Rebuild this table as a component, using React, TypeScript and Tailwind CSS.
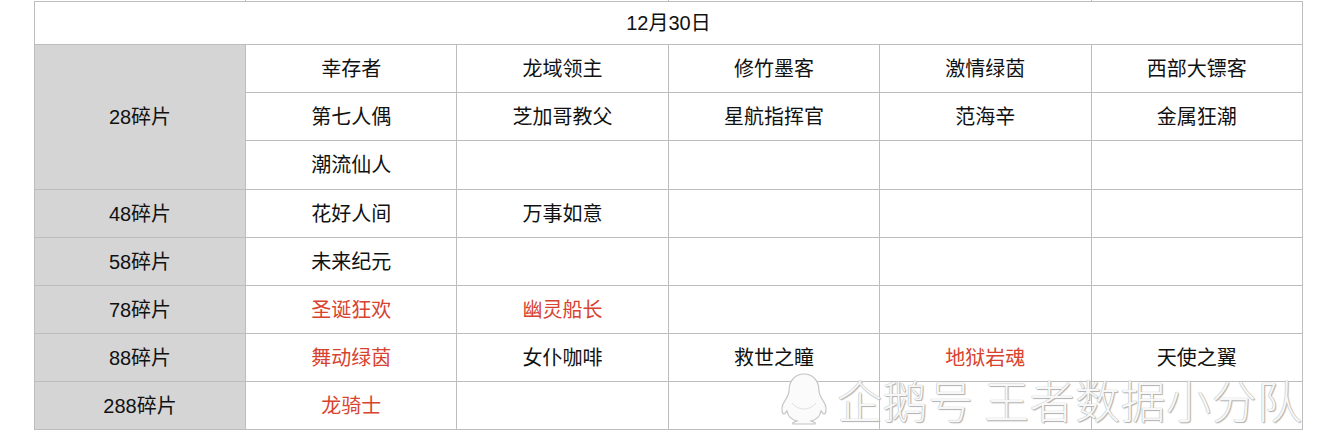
import React from "react";

type Cell = { t: string; red?: boolean };

const rows: { label?: string; span?: number; cells: Cell[] }[] = [
  {
    label: "28碎片",
    span: 3,
    cells: [{ t: "幸存者" }, { t: "龙域领主" }, { t: "修竹墨客" }, { t: "激情绿茵" }, { t: "西部大镖客" }],
  },
  { cells: [{ t: "第七人偶" }, { t: "芝加哥教父" }, { t: "星航指挥官" }, { t: "范海辛" }, { t: "金属狂潮" }] },
  { cells: [{ t: "潮流仙人" }, { t: "" }, { t: "" }, { t: "" }, { t: "" }] },
  { label: "48碎片", cells: [{ t: "花好人间" }, { t: "万事如意" }, { t: "" }, { t: "" }, { t: "" }] },
  { label: "58碎片", cells: [{ t: "未来纪元" }, { t: "" }, { t: "" }, { t: "" }, { t: "" }] },
  {
    label: "78碎片",
    cells: [{ t: "圣诞狂欢", red: true }, { t: "幽灵船长", red: true }, { t: "" }, { t: "" }, { t: "" }],
  },
  {
    label: "88碎片",
    cells: [
      { t: "舞动绿茵", red: true },
      { t: "女仆咖啡" },
      { t: "救世之瞳" },
      { t: "地狱岩魂", red: true },
      { t: "天使之翼" },
    ],
  },
  { label: "288碎片", cells: [{ t: "龙骑士", red: true }, { t: "" }, { t: "" }, { t: "" }, { t: "" }] },
];

function Penguin() {
  return (
    <svg width="50" height="54" viewBox="0 0 50 54" fill="none">
      <path
        d="M25 2C15 2 10 10 10 19c0 4-3 8-6 13-2 5-1 10 1 10 1 0 2-2 3-3 1 5 5 9 10 10-3 1-5 2-4 3h22c1-1-1-2-4-3 5-1 9-5 10-10 1 1 2 3 3 3 2 0 3-5 1-10-3-5-6-9-6-13 0-9-5-17-15-17z"
        fill="#fbfbfb"
        stroke="#c4c4c4"
        strokeWidth="1.2"
      />
      <path d="M13 31c3 4 8 6 12 6s9-2 12-6" stroke="#e0e0e0" strokeWidth="1" />
    </svg>
  );
}

export default function App() {
  return (
    <div className="relative w-[1334px] h-[447px] bg-white overflow-hidden font-['Liberation_Sans','Noto_Sans_CJK_SC',sans-serif] text-[20px] text-[#111]">
      {/* sliver of the previous row */}
      <div className="ml-[34px] w-[1269px] h-[1px] flex">
        <div className="w-[211px]" />
        <div className="w-[1px] bg-[#bdbdbd]" />
        <div className="w-[422px]" />
        <div className="w-[1px] bg-[#bdbdbd]" />
        <div className="w-[422px]" />
        <div className="w-[1px] bg-[#bdbdbd]" />
      </div>
      <table className="ml-[34px] w-[1269px] border-collapse table-fixed">
        <colgroup>
          <col className="w-[211px]" />
          <col />
          <col />
          <col />
          <col />
          <col />
        </colgroup>
        <tbody>
          <tr className="h-[43px]">
            <td colSpan={6} className="border border-[#bdbdbd] text-center p-0">
              12月30日
            </td>
          </tr>
          {rows.map((r, i) => (
            <tr key={i} className={i === 2 ? "h-[49px]" : "h-[48px]"}>
              {r.label !== undefined && (
                <td rowSpan={r.span ?? 1} className="border border-[#bdbdbd] bg-[#d5d5d5] text-center p-0">
                  {r.label}
                </td>
              )}
              {r.cells.map((c, j) => (
                <td
                  key={j}
                  className={
                    c.red
                      ? "border border-[#bdbdbd] text-center p-0 text-[#d8432f]"
                      : "border border-[#bdbdbd] text-center p-0"
                  }
                >
                  {c.t}
                </td>
              ))}
            </tr>
          ))}
        </tbody>
      </table>

      {/* watermark */}
      <div className="absolute left-[779px] top-[372px] flex items-center gap-[8px] pointer-events-none">
        <Penguin />
        <span className="text-[45px] leading-none tracking-[0.5px] text-[#f7f7f7] font-['Noto_Sans_CJK_SC',sans-serif] font-light [text-shadow:0_0_1px_#8f8f8f,1px_1px_1px_#b5b5b5]">
          企鹅号 王者数据小分队
        </span>
      </div>
    </div>
  );
}
